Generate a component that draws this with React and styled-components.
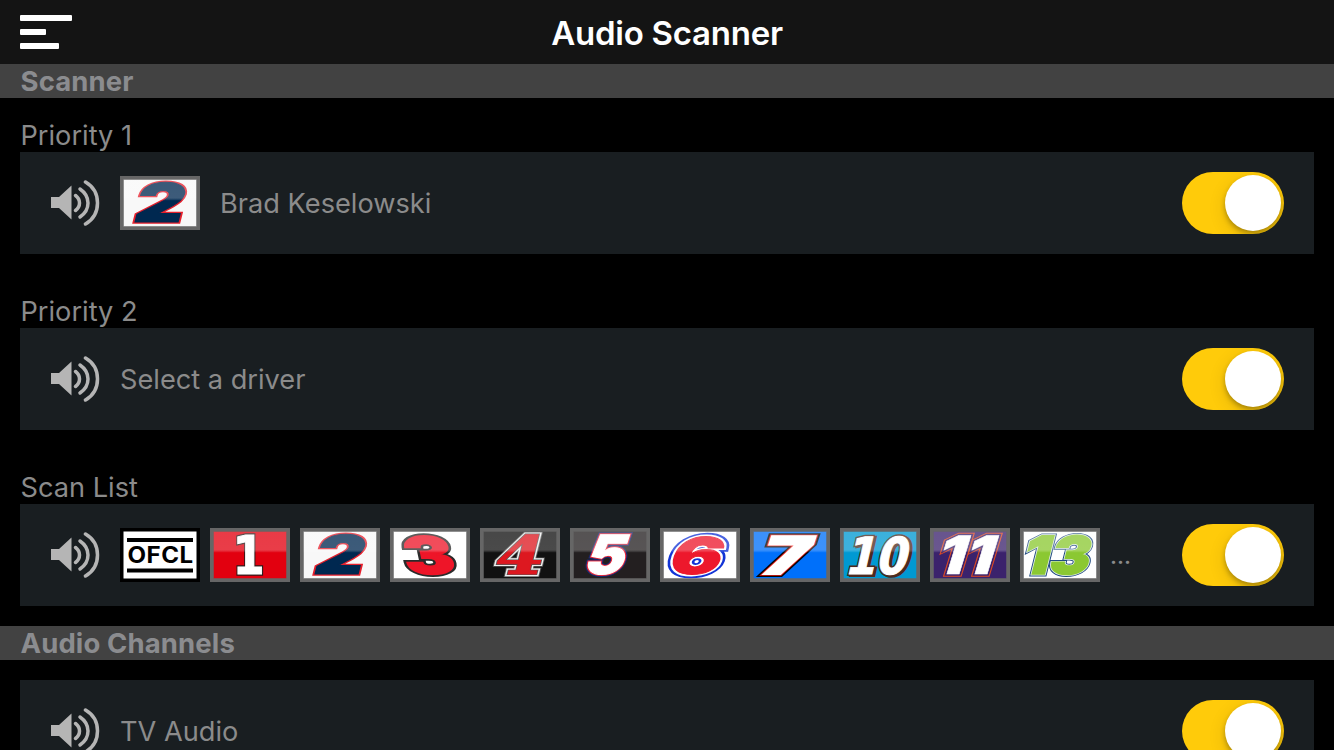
import React, { useId } from "react";
import styled, { createGlobalStyle } from "styled-components";

const GlobalStyle = createGlobalStyle`
  *, *::before, *::after { box-sizing: border-box; }
  html, body { margin: 0; background: #000; }
  body {
    height: 750px;
    overflow: hidden;
    font-family: Inter, "Liberation Sans", sans-serif;
    color: #8b8b8b;
  }
`;

const Screen = styled.div`
  width: 1334px;
  height: 750px;
  overflow: hidden;
  background: #000;
`;

const Header = styled.header`
  display: grid;
  grid-template-columns: 52px 1fr 52px;
  align-items: center;
  height: 64px;
  padding: 0 20px;
  background: #141414;
`;

const MenuButton = styled.button`
  display: flex;
  flex-direction: column;
  gap: 8px;
  padding: 0;
  border: 0;
  background: none;
`;

const MenuLine = styled.span`
  width: ${(p) => p.$width}px;
  height: 6px;
  border-radius: 1px;
  background: #fff;
`;

const Title = styled.h1`
  margin: 0;
  padding-top: 1px;
  text-align: center;
  color: #fff;
  font-size: 33px;
  font-weight: 600;
  line-height: 40px;
  letter-spacing: -0.25px;
`;

const SectionBar = styled.h2`
  height: 34px;
  margin: 0;
  padding: 0 20.5px;
  background: #424242;
  color: #8b8c8f;
  font-size: 27.5px;
  font-weight: 700;
  line-height: 34px;
  letter-spacing: 0.12px;
`;

const SectionBody = styled.section`
  padding: 20px 20px;
`;

const Group = styled.div`
  & + & { margin-top: 40px; }
`;

const GroupLabel = styled.div`
  height: 34px;
  padding-left: 0.5px;
  font-size: 27.2px;
  line-height: 36px;
`;

const Panel = styled.div`
  display: flex;
  align-items: center;
  height: 102px;
  padding: 0 30px;
  background: #191e21;
`;

const SpeakerIcon = styled.svg`
  flex: none;
  width: 50px;
  height: 46px;
  margin-right: 20px;
`;

const DriverName = styled.span`
  margin-left: ${(p) => (p.$afterPlate ? 20 : 0)}px;
  padding-top: 2px;
  font-size: 27.2px;
  line-height: 36px;
`;

const PlateRow = styled.div`
  display: flex;
  gap: 10px;
`;

const PlateFrame = styled.svg`
  display: block;
  flex: none;
  width: 80px;
  height: 54px;
`;

const More = styled.span`
  margin-left: 10px;
  padding-top: 2px;
  font-size: 23px;
  font-weight: 500;
  line-height: 36px;
`;

const Track = styled.button`
  display: flex;
  justify-content: flex-end;
  flex: none;
  width: 102px;
  height: 62px;
  margin-left: auto;
  padding: 3px;
  border: 0;
  border-radius: 31px;
  background: #ffcb0a;
  overflow: hidden;
`;

const Knob = styled.span`
  width: 56px;
  height: 56px;
  border-radius: 50%;
  background: #fff;
  box-shadow: 0 3px 5px rgba(0, 0, 0, 0.28), 0 5px 18px rgba(0, 0, 0, 0.12);
`;

const Speaker = () => (
  <SpeakerIcon viewBox="0 0 50 46">
    <path d="M1 17H9L21.5 5.5V39.5L9 28H1Z" fill="#b5b5b5" />
    <g fill="none" stroke="#b5b5b5" strokeWidth="3.5" strokeLinecap="round">
      <path d="M25.5 15.5Q29.5 18.5 29.5 23T25.5 30.5" />
      <path d="M30 9Q38 14.5 38 23T30 37" />
      <path d="M35.5 2Q47.5 9 47.5 23T35.5 44" />
    </g>
  </SpeakerIcon>
);

const Toggle = ({ label }) => (
  <Track type="button" role="switch" aria-checked="true" aria-label={label}>
    <Knob />
  </Track>
);

const PLATES = {
  1: { bg: "#e2000f", fill: "#fff", weight: 1, outlines: [["#2a1a1a", 3.5]], font: "DejaVu Sans", size: 54, x: 22.5, sx: 0.86, skew: 0 },
  2: { bg: "#f8f8f8", fill: "#002850", weight: 1, outlines: [["#e6202c", 3.6]], font: "Inter", size: 54, x: 11.5, sx: 1.42, skew: 14 },
  3: { bg: "#fff", fill: "#ee1528", weight: 1.5, outlines: [["#2b2b2b", 5]], font: "Inter", size: 52, x: 17, sx: 1.46, skew: -12 },
  4: { bg: "#111", fill: "#dd1820", weight: 1, outlines: [["#555", 6], ["#eee", 4.5], ["#555", 2.2]], font: "DejaVu Serif", size: 53, x: 12, sx: 1.3, skew: 14 },
  5: { bg: "#231f20", fill: "#fff", weight: 1, outlines: [["#17286e", 5], ["#ee2c3c", 3]], font: "Inter", size: 54, x: 12, sx: 1.1, skew: 18 },
  6: { bg: "#fff", fill: "#ed182c", weight: 1, outlines: [["#1234d6", 7.5], ["#fff", 4]], font: "Inter", size: 51, x: 5.5, sx: 1.5, skew: 20 },
  7: { bg: "#0070fa", fill: "#fff", weight: 2, outlines: [["#050505", 6], ["#ec1c16", 3.5]], font: "Inter", size: 52, x: 8, sx: 1.52, skew: 18 },
  10: { bg: "#0099d2", fill: "#fff", weight: 1, outlines: [["#4b2a20", 4]], font: "DejaVu Sans", size: 51, x: 4, sx: 0.87, skew: 13, shadow: true },
  11: { bg: "#3b226c", fill: "#fff", weight: 0.5, outlines: [["#dc4a24", 5.5], ["#3b226c", 3.5]], font: "Inter", size: 53, x: 4, sx: 1.17, skew: 17 },
  13: { bg: "#fff", fill: "#8bc832", weight: 1.6, outlines: [["#204a80", 4.8], ["#e8f3ea", 3]], font: "Inter", size: 52.5, x: 0, sx: 1.14, skew: 14 },
};

const NumberPlate = ({ number }) => {
  const id = useId();
  const p = PLATES[number];
  return (
    <PlateFrame viewBox="0 0 80 54">
      <defs>
        <linearGradient id={id + "g"} x1="0" y1="0" x2="0" y2="1">
          <stop offset="0" stopColor="#fff" stopOpacity="0.23" />
          <stop offset="0.88" stopColor="#fff" stopOpacity="0.24" />
          <stop offset="1" stopColor="#fff" stopOpacity="0.04" />
        </linearGradient>
        <text
          id={id + "t"}
          transform={`translate(${p.x} 46.3) skewX(${-p.skew}) scale(${p.sx} 1)`}
          fontFamily={p.font}
          fontWeight="900"
          fontSize={p.size}
        >
          {number}
        </text>
      </defs>
      <rect width="80" height="54" fill="#666" />
      <rect x="3.5" y="3.5" width="73" height="47" fill={p.bg} />
      {p.shadow && <use href={`#${id}t`} x="2" y="1" fill="#4b2a20" stroke="#4b2a20" strokeWidth="4" />}
      {p.outlines.map(([color, width]) => (
        <use key={width} href={`#${id}t`} fill={color} stroke={color} strokeWidth={width} />
      ))}
      <use href={`#${id}t`} fill={p.fill} stroke={p.fill} strokeWidth={p.weight} />
      <rect x="3.5" y="3.5" width="73" height="21" fill={`url(#${id}g)`} />
      <rect x="3.5" y="3.5" width="73" height="47" fill="none" stroke="#666" strokeOpacity="0.5" />
    </PlateFrame>
  );
};

const OfficialPlate = () => (
  <PlateFrame viewBox="0 0 80 54">
    <rect width="80" height="54" />
    <rect x="3.5" y="3.5" width="73" height="47" fill="#fff" />
    <rect x="7" y="10" width="66" height="4" />
    <rect x="7" y="40.5" width="66" height="4" />
    <text
      transform="translate(40.5 35) scale(1.08 1)"
      textAnchor="middle"
      fontFamily="Inter"
      fontWeight="650"
      fontSize="22.3"
      letterSpacing="0.5"
    >
      OFCL
    </text>
  </PlateFrame>
);

export default function App() {
  return (
    <>
      <GlobalStyle />
      <Screen>
        <Header>
          <MenuButton type="button" aria-label="Menu">
            <MenuLine $width={52} />
            <MenuLine $width={26} />
            <MenuLine $width={39} />
          </MenuButton>
          <Title>Audio Scanner</Title>
        </Header>

        <SectionBar>Scanner</SectionBar>
        <SectionBody>
          <Group>
            <GroupLabel>Priority 1</GroupLabel>
            <Panel>
              <Speaker />
              <NumberPlate number={2} />
              <DriverName $afterPlate>Brad Keselowski</DriverName>
              <Toggle label="Priority 1" />
            </Panel>
          </Group>
          <Group>
            <GroupLabel>Priority 2</GroupLabel>
            <Panel>
              <Speaker />
              <DriverName>Select a driver</DriverName>
              <Toggle label="Priority 2" />
            </Panel>
          </Group>
          <Group>
            <GroupLabel>Scan List</GroupLabel>
            <Panel>
              <Speaker />
              <PlateRow>
                <OfficialPlate />
                {[1, 2, 3, 4, 5, 6, 7, 10, 11, 13].map((n) => (
                  <NumberPlate key={n} number={n} />
                ))}
              </PlateRow>
              <More>...</More>
              <Toggle label="Scan List" />
            </Panel>
          </Group>
        </SectionBody>

        <SectionBar>Audio Channels</SectionBar>
        <SectionBody>
          <Panel>
            <Speaker />
            <DriverName>TV Audio</DriverName>
            <Toggle label="TV Audio" />
          </Panel>
        </SectionBody>
      </Screen>
    </>
  );
}
